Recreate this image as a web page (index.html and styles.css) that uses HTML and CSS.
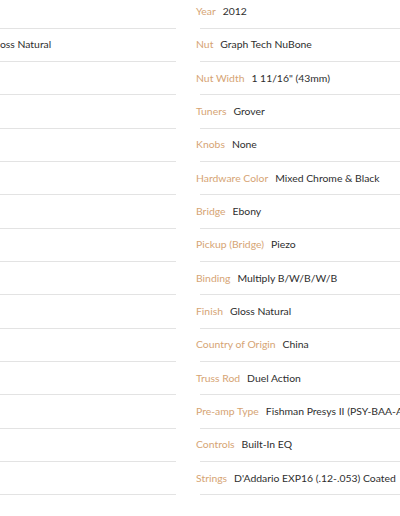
FILE: index.html
```html
<!DOCTYPE html>
<html>
<head>
<meta charset="utf-8">
<link rel="stylesheet" href="styles.css">
</head>
<body>
<div class="specs">
  <ul class="col col-left">
    <li class="item">&nbsp;</li>
    <li class="item"><span class="label">Finish</span><span class="value">Gloss Natural</span></li>
    <li class="item">&nbsp;</li>
    <li class="item">&nbsp;</li>
    <li class="item">&nbsp;</li>
    <li class="item">&nbsp;</li>
    <li class="item">&nbsp;</li>
    <li class="item">&nbsp;</li>
    <li class="item">&nbsp;</li>
    <li class="item">&nbsp;</li>
    <li class="item">&nbsp;</li>
    <li class="item">&nbsp;</li>
    <li class="item">&nbsp;</li>
    <li class="item">&nbsp;</li>
    <li class="item">&nbsp;</li>
  </ul>
  <ul class="col col-right">
    <li class="item"><span class="label">Year</span><span class="value">2012</span></li>
    <li class="item"><span class="label">Nut</span><span class="value">Graph Tech NuBone</span></li>
    <li class="item"><span class="label">Nut Width</span><span class="value">1 11/16" (43mm)</span></li>
    <li class="item"><span class="label">Tuners</span><span class="value">Grover</span></li>
    <li class="item"><span class="label">Knobs</span><span class="value">None</span></li>
    <li class="item"><span class="label">Hardware Color</span><span class="value">Mixed Chrome &amp; Black</span></li>
    <li class="item"><span class="label">Bridge</span><span class="value">Ebony</span></li>
    <li class="item"><span class="label">Pickup (Bridge)</span><span class="value">Piezo</span></li>
    <li class="item"><span class="label">Binding</span><span class="value">Multiply B/W/B/W/B</span></li>
    <li class="item"><span class="label">Finish</span><span class="value">Gloss Natural</span></li>
    <li class="item"><span class="label">Country of Origin</span><span class="value">China</span></li>
    <li class="item"><span class="label">Truss Rod</span><span class="value">Duel Action</span></li>
    <li class="item"><span class="label">Pre-amp Type</span><span class="value">Fishman Presys II (PSY-BAA-AB)</span></li>
    <li class="item"><span class="label">Controls</span><span class="value">Built-In EQ</span></li>
    <li class="item"><span class="label">Strings</span><span class="value">D'Addario EXP16 (.12-.053) Coated</span></li>
  </ul>
</div>
</body>
</html>
```
FILE: styles.css
```css
html, body {
  margin: 0;
  padding: 0;
  background: #ffffff;
  overflow: hidden;
  width: 400px;
  height: 516px;
}

body {
  font-family: Lato, "Noto Sans", sans-serif;
  font-size: 10.4px;
  color: #333333;
}

.specs {
  display: flex;
  gap: 20px;
  margin-top: -4.6px;
  margin-left: -44px;
  width: 700px;
}

.col {
  list-style: none;
  margin: 0;
  padding: 0;
  flex: none;
}

.col-left {
  width: 220px;
}

.col-right {
  width: 300px;
}

.item {
  box-sizing: border-box;
  height: 33.333px;
  padding-bottom: 2px;
  display: flex;
  align-items: center;
  white-space: nowrap;
  position: relative;
}

.item::after {
  content: "";
  position: absolute;
  left: 4px;
  right: 0;
  bottom: 0;
  height: 1px;
  background: #e3e3e3;
}

.label {
  color: #d6a474;
  margin-right: 7px;
}

.value {
  color: #2e2e2e;
}
```
